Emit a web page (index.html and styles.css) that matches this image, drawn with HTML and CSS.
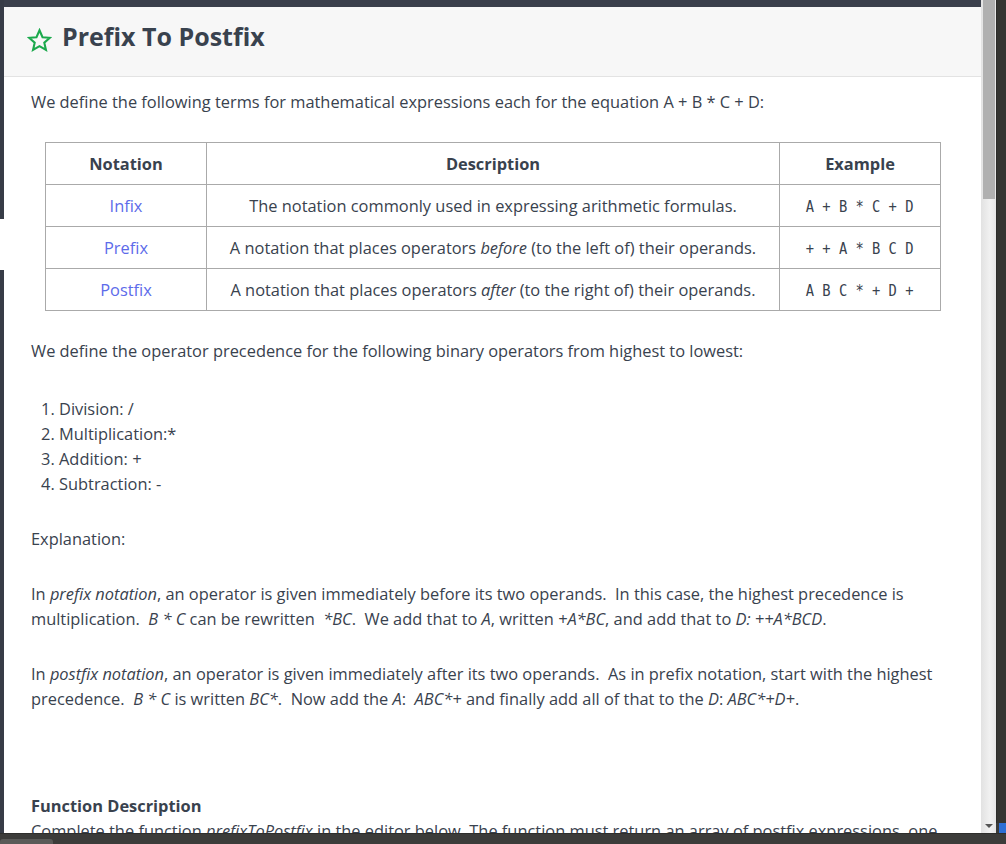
FILE: index.html
```html
<!DOCTYPE html>
<html>
<head>
<meta charset="utf-8">
<link rel="stylesheet" href="styles.css">
</head>
<body>
<div class="frame">
  <div class="leftedge">
    <div class="edge-dark edge-top"></div>
    <div class="edge-gap"></div>
    <div class="edge-dark edge-rest"></div>
  </div>
  <div class="main">
    <div class="topstrip"></div>
    <div class="modal">
      <div class="modal-header">
        <svg class="star" width="25" height="25" viewBox="0 0 24 24"><path d="M12 2.2l2.9 6.6 7.1.6-5.4 4.7 1.6 7-6.2-3.7-6.2 3.7 1.6-7L2 9.4l7.1-.6z" fill="none" stroke="#1ba94c" stroke-width="2" stroke-linejoin="miter"/></svg>
        <h1 class="title">Prefix To Postfix</h1>
      </div>
      <div class="modal-body">
        <p class="para first">We define the following terms for mathematical expressions each for the equation A + B * C + D:</p>
        <table class="terms">
          <thead>
            <tr><th class="c1">Notation</th><th class="c2">Description</th><th class="c3">Example</th></tr>
          </thead>
          <tbody>
            <tr><td><a class="link">Infix</a></td><td>The notation commonly used in expressing arithmetic formulas.</td><td><code class="mono">A + B * C + D</code></td></tr>
            <tr><td><a class="link">Prefix</a></td><td>A notation that places operators <em>before</em> (to the left of) their operands.</td><td><code class="mono">+ + A * B C D</code></td></tr>
            <tr><td><a class="link">Postfix</a></td><td>A notation that places operators <em>after</em> (to the right of) their operands.</td><td><code class="mono">A B C * + D +</code></td></tr>
          </tbody>
        </table>
        <p class="para">We define the operator precedence for the following binary operators from highest to lowest:</p>
        <ol class="prec">
          <li>Division: /</li>
          <li>Multiplication:*</li>
          <li>Addition: <em>+</em></li>
          <li>Subtraction: -</li>
        </ol>
        <p class="para">Explanation:</p>
        <p class="para">In <em>prefix notation</em>, an operator is given immediately before its two operands.&nbsp; In this case, the highest precedence is multiplication.&nbsp; <em>B * C</em> can be rewritten&nbsp; <em>*BC</em>.&nbsp; We add that to <em>A</em>, written <em>+A*BC</em>, and add that to <em>D: ++A*BCD</em>.</p>
        <p class="para">In <em>postfix notation</em>, an operator is given immediately after its two operands.&nbsp; As in prefix notation, start with the highest precedence.&nbsp; <em>B * C</em> is written <em>BC*</em>.&nbsp; Now add the <em>A</em>:&nbsp; <em>ABC*+</em> and finally add all of that to the <em>D</em>: <em>ABC*+D+</em>.</p>
        <p class="para spacer">&nbsp;</p>
        <p class="para heading"><strong>Function Description</strong></p>
        <p class="para tight">Complete the function <em>prefixToPostfix</em> in the editor below. The function must return an array of postfix expressions, one</p>
      </div>
    </div>
  </div>
  <div class="scrollbar">
    <div class="thumb"></div>
    <div class="track"></div>
    <div class="arrow"></div>
  </div>
  <div class="rightdark">
    <div class="rd-fill"></div>
    <div class="rd-blue"></div>
  </div>
</div>
<div class="bottombar">
  <div class="tab"></div>
</div>
</body>
</html>
```
FILE: styles.css
```css
html, body {
  margin: 0;
  padding: 0;
}
body {
  width: 1006px;
  height: 844px;
  overflow: hidden;
  background: #3c3c3a;
  font-family: "Open Sans", "Noto Sans", sans-serif;
  color: #39424e;
}
.frame {
  display: flex;
  height: 833px;
}
.leftedge {
  width: 4px;
  display: flex;
  flex-direction: column;
}
.edge-dark {
  background: #373c47;
}
.edge-top {
  height: 219px;
}
.edge-gap {
  height: 51px;
  background: #ffffff;
}
.edge-rest {
  flex: 1;
}
.main {
  width: 977px;
  display: flex;
  flex-direction: column;
}
.topstrip {
  height: 7px;
  background: #3a3f4b;
}
.modal {
  flex: 1;
  background: #ffffff;
  overflow: hidden;
}
.modal-header {
  height: 70px;
  box-sizing: border-box;
  background: #f7f7f7;
  border-bottom: 1px solid #e3e3e3;
  display: flex;
  align-items: flex-start;
  padding: 14px 0 0 23px;
}
.star {
  width: 25px;
  height: 25px;
  margin-top: 7px;
}
.title {
  margin: 0 0 0 10px;
  font-size: 25px;
  line-height: 30px;
  font-weight: 700;
  color: #39424e;
}
.modal-body {
  padding: 12px 27px 0 27px;
  font-size: 16.4px;
  line-height: 25px;
}
.para {
  margin: 0 0 30px 0;
}
.para.first {
  margin-bottom: 28px;
}
.terms {
  border-collapse: collapse;
  width: 895px;
  margin: 0 0 27px 14px;
  table-layout: fixed;
}
.terms th, .terms td {
  border: 1px solid #aaaaaa;
  height: 42px;
  padding: 0 6px;
  text-align: center;
  font-size: 16.4px;
  line-height: 25px;
  box-sizing: border-box;
}
.terms th {
  font-weight: 700;
}
.c1 { width: 161px; }
.c2 { width: 573px; }
.c3 { width: 161px; }
.link {
  color: #5d6bea;
  text-decoration: none;
}
.mono {
  display: inline-block;
  font-family: "DejaVu Sans Mono", monospace;
  font-size: 16px;
  line-height: 25px;
  transform: scaleX(0.86);
  white-space: pre;
}
.prec {
  margin: 33px 0 30px 0;
  padding-left: 28px;
}
.spacer {
  height: 52px;
  margin: 0;
}
.heading {
  margin: 0;
}
.tight {
  margin: 0;
}
.scrollbar {
  width: 15px;
  display: flex;
  flex-direction: column;
  background: linear-gradient(to right, #e2e2e2, #f1f1f1 60%, #e6e6e6);
}
.thumb {
  height: 199px;
  margin: 0 1px 0 2px;
  background: #b0b0b0;
}
.track {
  flex: 1;
}
.arrow {
  height: 0;
  width: 0;
  margin: 0 0 5px 4px;
  border-left: 4px solid transparent;
  border-right: 4px solid transparent;
  border-top: 4px solid #555555;
}
.rightdark {
  width: 10px;
  display: flex;
  flex-direction: column;
}
.rd-fill {
  flex: 1;
  background: #353532;
  border-left: 1px solid #2c2c2a;
}
.rd-blue {
  height: 10px;
  margin-left: 3px;
  background: #2d6fd6;
}
.bottombar {
  height: 11px;
  background: #3c3c3a;
  border-top: 1px solid #2e2e2c;
  box-sizing: border-box;
  display: flex;
  align-items: flex-end;
}
.tab {
  width: 53px;
  height: 5px;
  background: #5a5a58;
  border-radius: 3px 3px 0 0;
}
```
